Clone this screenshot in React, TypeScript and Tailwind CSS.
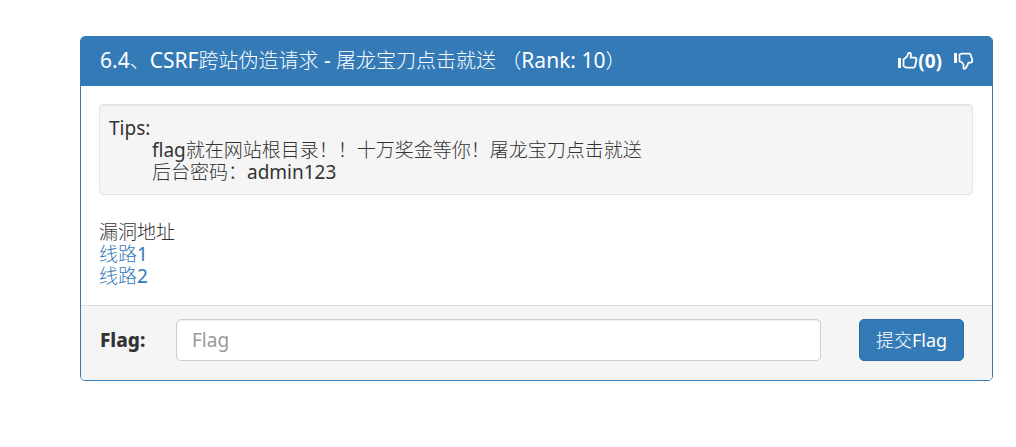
import React from "react";

function ThumbUp() {
  return (
    <svg width="20" height="18" viewBox="0 0 20 18" fill="none" stroke="currentColor" strokeWidth="1.75" strokeLinejoin="round" aria-hidden="true">
      <path d="M0 6h3v10H0z" fill="currentColor" stroke="none" />
      <path d="M5.5 7.5 L9 4.5 L10.5 .9 L12.5 .9 L13 2.5 L12.5 5.5 H17.5 L18.5 7.5 L17 14.5 L16 15.5 H8 L5.5 14 Z" />
    </svg>
  );
}

function ThumbDown() {
  return (
    <svg width="20" height="18" viewBox="0 0 20 18" fill="none" stroke="currentColor" strokeWidth="1.75" strokeLinejoin="round" aria-hidden="true">
      <path d="M0 1h3v10H0z" fill="currentColor" stroke="none" />
      <path d="M5.5 9.5 V2.5 L8 1.5 H15.5 L16.5 2.5 L18.5 8.5 L17.5 10.5 H14.5 L13.5 13 L11.5 16.5 L9.5 16.5 V12.5 L7.5 10 Z" />
    </svg>
  );
}

export default function App() {
  return (
    <main className="pt-9 pr-[23px] pb-9 pl-20 font-['Noto_Sans','Noto_Sans_CJK_SC_Light','Noto_Sans_CJK_SC',sans-serif] text-[19px] leading-[22px] text-[#333]">
      <section className="overflow-hidden rounded-[5px] border border-[#337ab7] bg-white">
        <header className="flex items-center justify-between bg-[#337ab7] pt-[11px] pr-[18px] pb-[13px] pl-[19px] text-white">
          <h3 className="whitespace-pre text-xl leading-[25px] font-normal">
            <span className="text-[21px]">6.4</span>、<span className="text-[21px]">CSRF</span>跨站伪造请求<span className="text-[21px]"> - </span>屠龙宝刀点击就送 （<span className="text-[21px]">Rank: 10</span>）
          </h3>
          <div className="flex items-center gap-3 font-bold">
            <button type="button" aria-label="Like" className="flex items-center">
              <ThumbUp />
              <span>(0)</span>
            </button>
            <button type="button" aria-label="Dislike" className="flex items-center">
              <ThumbDown />
            </button>
          </div>
        </header>
        <div className="py-[18px] pr-[19px] pl-[18px]">
          <pre className="rounded border border-[#e3e3e3] bg-[#f5f5f5] px-[9px] pt-3 pb-[11px] font-[inherit] shadow-[inset_0_1px_1px_rgba(0,0,0,0.05)]">
            <p>Tips:</p>
            <p className="pl-[43px]">flag就在网站根目录！！十万奖金等你！屠龙宝刀点击就送</p>
            <p className="pl-[43px]">后台密码：admin123</p>
          </pre>
          <div className="mt-[26px]">
            <p>漏洞地址</p>
            <p><a href="#line1" className="text-[#337ab7]">线路1</a></p>
            <p><a href="#line2" className="text-[#337ab7]">线路2</a></p>
          </div>
        </div>
        <form className="flex items-center border-t border-[#ddd] bg-[#f5f5f5] pt-[13px] pr-7 pb-[19px] pl-[19px]">
          <label htmlFor="flag" className="w-[76px] shrink-0 font-extrabold">Flag:</label>
          <input id="flag" type="text" placeholder="Flag" className="h-[42px] min-w-0 flex-1 rounded-[5px] border border-[#ccc] bg-white px-[15px] placeholder:text-[#999] shadow-[inset_0_1px_1px_rgba(0,0,0,0.075)]" />
          <button type="button" className="ml-[38px] h-[42px] w-[105px] shrink-0 rounded-[5px] border border-[#2e6da4] bg-[#337ab7] text-lg text-white">提交Flag</button>
        </form>
      </section>
    </main>
  );
}
